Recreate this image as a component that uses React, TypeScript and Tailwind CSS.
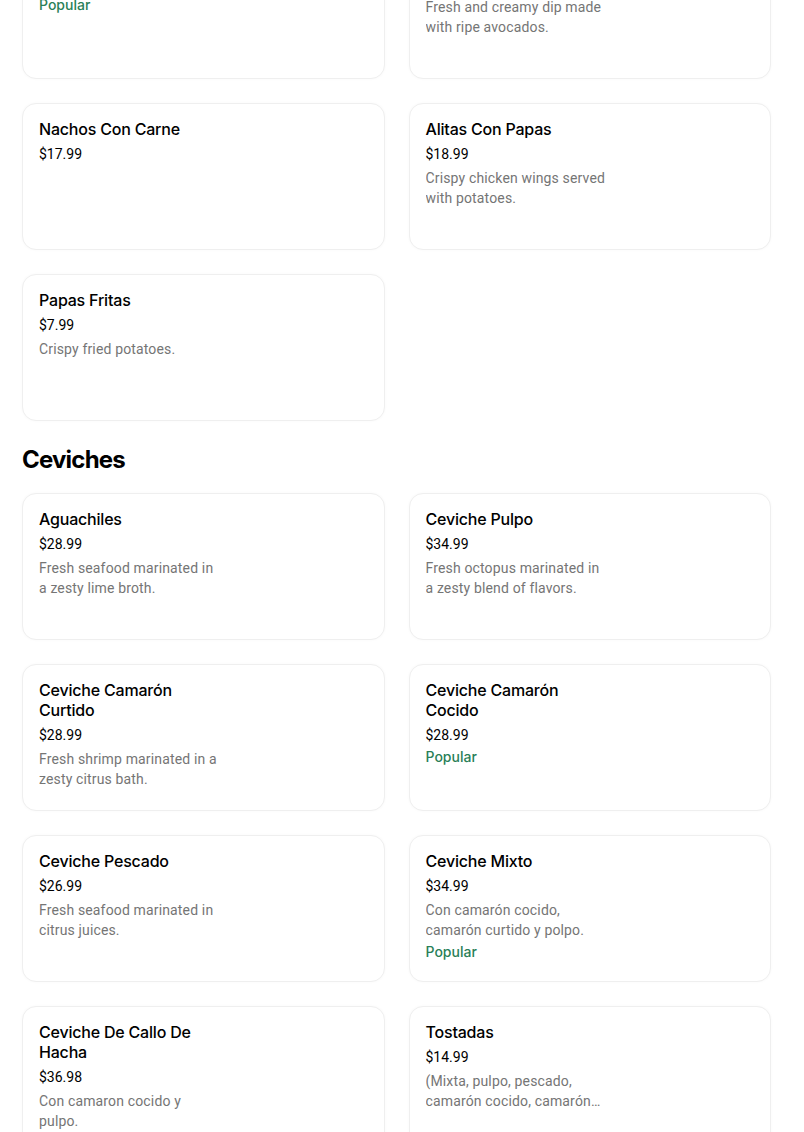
import React from "react";

type Item = { title: string; price: string; desc?: string; popular?: boolean };

const top: Item[] = [
  { title: "Nachos", price: "$15.99", popular: true },
  { title: "Guacamole", price: "$12.99", desc: "Fresh and creamy dip made with ripe avocados." },
  { title: "Nachos Con Carne", price: "$17.99" },
  { title: "Alitas Con Papas", price: "$18.99", desc: "Crispy chicken wings served with potatoes." },
  { title: "Papas Fritas", price: "$7.99", desc: "Crispy fried potatoes." },
];

const ceviches: Item[] = [
  { title: "Aguachiles", price: "$28.99", desc: "Fresh seafood marinated in a zesty lime broth." },
  { title: "Ceviche Pulpo", price: "$34.99", desc: "Fresh octopus marinated in a zesty blend of flavors." },
  { title: "Ceviche Camarón Curtido", price: "$28.99", desc: "Fresh shrimp marinated in a zesty citrus bath." },
  { title: "Ceviche Camarón Cocido", price: "$28.99", popular: true },
  { title: "Ceviche Pescado", price: "$26.99", desc: "Fresh seafood marinated in citrus juices." },
  { title: "Ceviche Mixto", price: "$34.99", desc: "Con camarón cocido, camarón curtido y polpo.", popular: true },
  { title: "Ceviche De Callo De Hacha", price: "$36.98", desc: "Con camaron cocido y pulpo." },
  { title: "Tostadas", price: "$14.99", desc: "(Mixta, pulpo, pescado, camarón cocido, camarón curtido)" },
];

const roboto = { fontFamily: "Roboto, 'Liberation Sans', sans-serif" };

function Card({ item }: { item: Item }) {
  return (
    <div className="h-[147px] rounded-[14px] border border-[#efefef] bg-white px-4 pt-[15px] shadow-[0_0_3px_rgba(0,0,0,0.03)]">
      <div className="w-[184px]">
        <div className="text-[16px] leading-5 font-medium tracking-[-0.2px] text-black">{item.title}</div>
        <div className="mt-[5px] text-[14px] leading-5 text-black" style={roboto}>
          {item.price}
        </div>
        {item.desc && (
          <div className="mt-1 line-clamp-2 text-[14px] leading-5 tracking-[0.15px] text-[#757575]" style={roboto}>
            {item.desc}
          </div>
        )}
        {item.popular && (
          <div className="mt-[2px] text-[14px] leading-5 font-medium text-[#2a7f58]">Popular</div>
        )}
      </div>
    </div>
  );
}

export default function App() {
  return (
    <div className="min-h-screen bg-white" style={{ fontFamily: "Inter, 'Noto Sans', sans-serif" }}>
      <div className="-mt-[68px] pl-[22px] pr-[33px]">
        <div className="grid grid-cols-2 gap-6">
          {top.map((it) => (
            <Card key={it.title} item={it} />
          ))}
        </div>
        <h2 className="mt-[23px] text-[24px] leading-8 font-bold tracking-[-0.8px] text-black">Ceviches</h2>
        <div className="mt-[17px] grid grid-cols-2 gap-6 pb-10">
          {ceviches.map((it) => (
            <Card key={it.title} item={it} />
          ))}
        </div>
      </div>
    </div>
  );
}
